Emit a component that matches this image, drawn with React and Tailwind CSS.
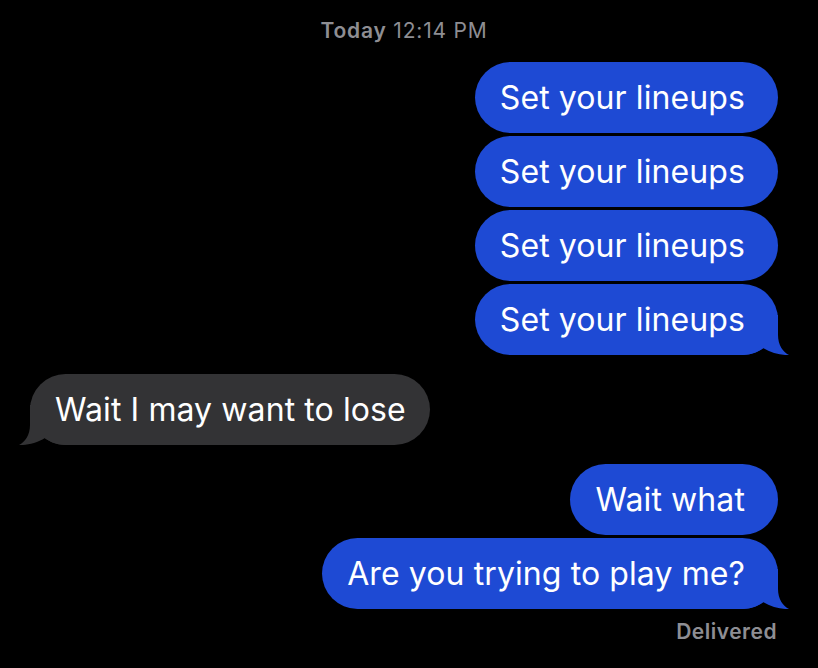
const FONT = { fontFamily: 'Inter, "Noto Sans", sans-serif' };

// bubble tail, drawn for the right side; mirrored for incoming messages
const Tail = ({ color, side }) => (
  <svg
    width="50"
    height="40"
    viewBox="0 0 50 40"
    className={
      side === "right"
        ? "absolute bottom-0 right-[-11px]"
        : "absolute bottom-0 left-[-11px] -scale-x-100"
    }
  >
    <path
      d="M0 0 H39 V20 C39 30 44 37 50 40 C43 40.5 32 38 24 33 C19 37 12 40 4 40 H0 Z"
      fill={color}
    />
  </svg>
);

const Sent = ({ text, tail }) => (
  <div className="flex justify-end">
    <div className="relative h-[71px] flex items-center rounded-[36px] bg-[#1e4ad4] pl-[25px] pr-[33px] text-white text-[32px] tracking-[0.1px]">
      {tail && <Tail color="#1e4ad4" side="right" />}
      <span className="relative">{text}</span>
    </div>
  </div>
);

const Received = ({ text, tail }) => (
  <div className="flex justify-start">
    <div className="relative h-[71px] flex items-center rounded-[36px] bg-[#333335] pl-[25px] pr-[24px] text-white text-[32px] tracking-[0.1px]">
      {tail && <Tail color="#333335" side="left" />}
      <span className="relative">{text}</span>
    </div>
  </div>
);

export default function App() {
  return (
    <div
      className="w-[818px] h-[668px] bg-black overflow-hidden pl-[30px] pr-[40px] pt-[18px]"
      style={FONT}
    >
      <div className="text-center text-[21px] leading-[26px] tracking-[0.8px] text-[#8e8e93]">
        <span className="font-semibold">Today</span> 12:14 PM
      </div>

      <div className="mt-[18px] flex flex-col gap-[3px]">
        <Sent text="Set your lineups" />
        <Sent text="Set your lineups" />
        <Sent text="Set your lineups" />
        <Sent text="Set your lineups" tail />
      </div>

      <div className="mt-[19px]">
        <Received text="Wait I may want to lose" tail />
      </div>

      <div className="mt-[19px] flex flex-col gap-[3px]">
        <Sent text="Wait what" />
        <Sent text="Are you trying to play me?" tail />
      </div>

      <div className="mt-[10px] text-right text-[21px] leading-[26px] tracking-[0.5px] font-semibold text-[#8e8e93] pr-[1px]">
        Delivered
      </div>
    </div>
  );
}
